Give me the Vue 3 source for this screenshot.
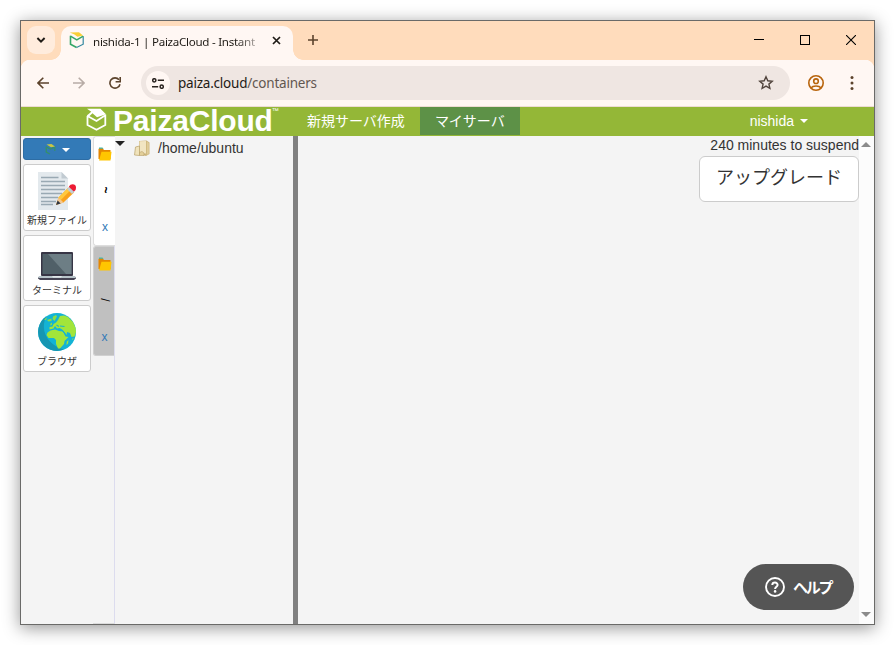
<script setup>
import { ref } from 'vue'

// ====== Ref & data declarations ======
const activeDir = ref('~')
const dirs = ref(['~', '/'])
const tools = [
  { id: 'file', label: '新規ファイル' },
  { id: 'terminal', label: 'ターミナル' },
  { id: 'browser', label: 'ブラウザ' },
]

// ====== Functions declarations ======
const selectDir = (dir) => {
  activeDir.value = dir
}
const closeDir = (dir) => {
  dirs.value = dirs.value.filter((item) => item !== dir)
}
</script>

<template>
  <div class="desktop">
    <div class="window">
      <!-- Tab strip -->
      <div class="tab-strip">
        <button class="tab-search">
          <svg width="10" height="8" viewBox="0 0 10 8">
            <path d="M1.4 2 L5 5.6 L8.6 2" fill="none" stroke="#1f1b16" stroke-width="1.9" />
          </svg>
        </button>
        <div class="tab">
          <svg class="favicon" width="16" height="17" viewBox="0 0 16 17">
            <path d="M1.5 3.8 V12.2 L7.6 15.5" fill="none" stroke="#36a768" stroke-width="1.6" />
            <path d="M7.6 15.5 L14.2 12.2 V4.2" fill="none" stroke="#3488a0" stroke-width="1.2" />
            <path d="M1.5 4.2 L7.8 7.8 L14.2 4.2" fill="none" stroke="#36a768" stroke-width="1.5" />
            <path d="M0.8 0.6 L10 0.3 L14 3.5 L8.5 4.8 L5.5 2.4 Z" fill="#f8cf36" />
          </svg>
          <span class="tab-title">nishida-1 | PaizaCloud - Instant</span>
          <svg class="tab-close" width="9" height="9" viewBox="0 0 9 9">
            <path d="M1 1 L8 8 M8 1 L1 8" stroke="#1f1b16" stroke-width="1.7" />
          </svg>
        </div>
        <svg class="new-tab" width="10" height="10" viewBox="0 0 10 10">
          <path d="M5 0 V10 M0 5 H10" stroke="#5c432c" stroke-width="1.6" />
        </svg>
        <div class="window-controls">
          <svg width="10" height="10" viewBox="0 0 10 10">
            <path d="M0 4.5 H10" stroke="#000" />
          </svg>
          <svg width="10" height="10" viewBox="0 0 10 10">
            <rect x="0.5" y="0.5" width="9" height="9" fill="none" stroke="#000" />
          </svg>
          <svg width="10" height="10" viewBox="0 0 10 10">
            <path d="M0 0 L10 10 M10 0 L0 10" stroke="#000" stroke-width="1.1" />
          </svg>
        </div>
      </div>

      <!-- Toolbar -->
      <div class="toolbar">
        <div class="nav-buttons">
          <svg width="12" height="12" viewBox="0 0 12 12">
            <path d="M12 6 H1 M6.3 0.7 L1 6 L6.3 11.3" fill="none" stroke="#5c432c" stroke-width="1.6" />
          </svg>
          <svg width="12" height="12" viewBox="0 0 12 12">
            <path d="M0 6 H11 M5.7 0.7 L11 6 L5.7 11.3" fill="none" stroke="#b8aca6" stroke-width="1.6" />
          </svg>
          <svg width="12" height="12" viewBox="0 0 12 12">
            <path d="M10 2.8 A5.1 5.1 0 1 0 11 7.2" fill="none" stroke="#5c432c" stroke-width="1.6" />
            <path d="M11.2 0 V4.7 H6.6" fill="none" stroke="#5c432c" stroke-width="1.6" />
          </svg>
        </div>
        <div class="address-bar">
          <span class="site-info">
            <svg width="12" height="11" viewBox="0 0 12 11">
              <g fill="none" stroke="#29231f" stroke-width="1.5">
                <circle cx="2.3" cy="2.3" r="1.6" />
                <path d="M5.8 2.3 H12 M0 8.7 H6.2" />
                <circle cx="9.7" cy="8.7" r="1.6" />
              </g>
            </svg>
          </span>
          <span class="url">paiza.cloud<span class="url-path">/containers</span></span>
          <svg class="star" width="16" height="16" viewBox="0 0 16 16">
            <path
              d="M8 1.8 L9.8 5.8 L14.2 6.2 L10.9 9.1 L11.9 13.4 L8 11.1 L4.1 13.4 L5.1 9.1 L1.8 6.2 L6.2 5.8 Z"
              fill="none"
              stroke="#51443d"
              stroke-width="1.4"
            />
          </svg>
        </div>
        <svg class="profile" width="18" height="18" viewBox="0 0 18 18">
          <g fill="none" stroke="#b8640c" stroke-width="1.6">
            <circle cx="9" cy="9" r="7.2" />
            <circle cx="9" cy="7.2" r="2.3" />
            <path d="M3.9 14 C6 11.3 12 11.3 14.1 14" />
          </g>
        </svg>
        <svg class="kebab" width="4" height="14" viewBox="0 0 4 14">
          <g fill="#5c432c">
            <circle cx="2" cy="1.6" r="1.5" />
            <circle cx="2" cy="7" r="1.5" />
            <circle cx="2" cy="12.4" r="1.5" />
          </g>
        </svg>
      </div>

      <!-- Site navbar -->
      <nav class="navbar">
        <a class="brand">
          <svg width="21" height="23" viewBox="0 0 21 23">
            <path
              d="M1.5 8 V17 L10.5 21.8 L19.3 17 V6.5 M1.5 8 L10.5 13 L19.3 7.2"
              fill="none"
              stroke="#fff"
              stroke-width="1.8"
            />
            <path d="M1 0.8 H14.5 L20 6.3 L11 9.2 L6.5 5.2 L2.5 9 L0.8 7.5 L5.3 3.8 Z" fill="#fff" />
          </svg>
          <span class="brand-name">PaizaCloud</span>
          <span class="brand-tm">™</span>
        </a>
        <a class="nav-item">新規サーバ作成</a>
        <a class="nav-item active">マイサーバ</a>
        <a class="user-menu">nishida <span class="caret"></span></a>
      </nav>

      <!-- Workspace -->
      <main class="workspace">
        <aside class="tools">
          <button class="server-menu">
            <svg width="11" height="12" viewBox="0 0 11 12">
              <path d="M1.3 3.5 V9 L5 11" fill="none" stroke="#35906b" stroke-width="1.4" />
              <path d="M1.3 4 L5.3 6 L9.8 4.2 V8" fill="none" stroke="#35906b" stroke-width="1.2" />
              <path d="M1.5 1.6 L6.5 1 L10 3.6 L6 4.2 Z" fill="#c9c744" />
            </svg>
            <span class="caret"></span>
          </button>
          <button v-for="tool in tools" :key="tool.id" class="tool" :class="tool.id">
            <svg v-if="tool.id === 'file'" width="38" height="38" viewBox="0 0 38 38">
              <path d="M0 0 H23.5 L30 6.5 V38 H0 Z" fill="#e3e9ed" />
              <path d="M23.5 0 L30 6.5 H23.5 Z" fill="#c2cbd2" />
              <path
                d="M3 5.5 H20.5 M3 9.5 H27 M3 13.5 H27 M3 17.5 H27 M3 21.5 H24 M3 25.5 H20 M3 29.5 H18 M3 32.5 H15"
                stroke="#99a9b3"
                stroke-width="1.5"
              />
              <path d="M18 33 L20.5 25.5 L30.5 15.5 L36 20.5 L25.5 30.5 Z" fill="#f9a11b" />
              <path d="M20.5 25.5 L30.5 15.5 L33 17.8 L22.8 28 Z" fill="#ffc83d" />
              <path d="M18 33 L20.5 25.5 L25.5 30.5 Z" fill="#f3c891" />
              <path d="M18 33 L19.6 28.5 L22.6 31.4 Z" fill="#303743" />
              <path d="M29 17 L31.6 14.4 L36.6 19.4 L34 22 Z" fill="#c2ccd4" />
              <path d="M30.8 14.8 C32.5 11.3 38 11.5 38 15.5 C38 17.5 37.5 18.5 35.8 19.6 Z" fill="#ed1c34" />
            </svg>
            <svg v-else-if="tool.id === 'terminal'" width="38" height="28" viewBox="0 0 38 28">
              <rect x="3" y="0" width="32" height="24" rx="1" fill="#373545" />
              <rect x="4.5" y="2" width="29" height="20" fill="#506068" />
              <path d="M10 2 H33.5 V22 H28 Z" fill="#6d7e85" />
              <path d="M0 25 H38 V26.5 L36 28 H2 L0 26.5 Z" fill="#454353" />
              <path d="M1 24 H37 L38 26 H0 Z" fill="#b7c3c9" />
              <path d="M14 24 H24 L23 25.5 H15 Z" fill="#e1e7ea" />
            </svg>
            <svg v-else width="38" height="38" viewBox="0 0 38 38">
              <circle cx="19" cy="19" r="19" fill="#13b3d5" />
              <path d="M8 3.5 A19 19 0 0 0 26 36.6 C12 33 1 20 8 3.5 Z" fill="#1696b2" />
              <path
                d="M20 7 L22 3 L26 2.5 L30 4 L35 9 L37.6 15 L38 19 L36.5 23.5 L33.5 24 L32 20 L29 19 L28.5 22 L26 18.5 L23.5 16 L21.5 15 L19 15.5 L17 13 L15.5 15.5 L11.5 16.5 L11.5 14 L14.5 13.5 L15.5 11 L18 9.5 Z"
                fill="#a2e53a"
              />
              <path
                d="M12.5 17.5 L17 16.5 L21 18 L25 18.5 L27.5 23.5 L30.5 24 L26.5 28 L26 31 L22 35.5 L20 35.5 L18 31 L18 27 L16 25 L10.5 25 L8.5 22 L9.5 19.5 Z"
                fill="#a2e53a"
              />
              <path
                d="M15 3.5 L18 2 L19 3.5 L16.5 8 L14.5 6 Z M9 7 L13.5 5.5 L13.5 8 L10.5 8.5 Z M12.5 10.5 L14 9.5 L14 12 L12 12.5 Z M6 6.5 L9 4.5 L8 7 Z"
                fill="#8cdd45"
              />
              <path d="M18.5 12 L21 13.5 M22 13 L26.5 13.5 M24 17 L27.5 21.5" stroke="#13b3d5" stroke-width="1.1" />
              <path d="M28.8 28.5 L30.5 27 L30 30.5 L28.5 32 Z M34 26 L35.5 25 L35 27 Z" fill="#a2e53a" />
            </svg>
            <span>{{ tool.label }}</span>
          </button>
        </aside>

        <div class="dir-tabs">
          <div
            v-for="dir in dirs"
            :key="dir"
            class="dir-tab"
            :class="{ active: dir === activeDir }"
            @click="selectDir(dir)"
          >
            <svg width="14" height="14" viewBox="0 0 14 14">
              <path d="M1 0.5 H4.5 L5.5 2 H1 Z" fill="#42b8ab" />
              <path d="M0.5 1.8 H5 L6 3 H12.5 V12 H0.5 Z" fill="#e58600" />
              <path d="M3.5 4.7 H13.5 L12.5 13.5 H1 Z" fill="#ffc600" />
            </svg>
            <span class="dir-name">{{ dir }}</span>
            <a class="dir-close" @click.stop="closeDir(dir)">x</a>
          </div>
        </div>

        <section class="tree">
          <span class="tree-toggle"></span>
          <svg width="16" height="17" viewBox="0 0 16 17">
            <path d="M5 1 L12.5 0.5 L15.5 2.5 V14 L12 16 L5 14 Z" fill="#cdb67c" />
            <path d="M5.5 1.3 L12 1 V13.5 H5.5 Z" fill="#f1e5c2" />
            <path d="M12.8 1.5 L14.8 3 V13.5 L12.8 15 Z" fill="#dfcc9a" />
            <path d="M1.5 7 L5.5 6 V15.5 L0.5 15 Z" fill="#f0e3bb" stroke="#b8a06a" stroke-width="0.7" />
            <path d="M5.5 12.5 L8 11.5 L10 13 V15.5 H5.5 Z" fill="#e3d09a" stroke="#b8a06a" stroke-width="0.6" />
          </svg>
          <span class="tree-label">/home/ubuntu</span>
        </section>

        <div class="splitter"></div>

        <section class="content">
          <div class="suspend">240 minutes to suspend</div>
          <button class="upgrade">アップグレード</button>
        </section>

        <div class="scrollbar">
          <span class="arrow-up"></span>
          <span class="arrow-down"></span>
        </div>
      </main>

      <button class="help">
        <svg width="20" height="20" viewBox="0 0 20 20">
          <circle cx="10" cy="10" r="9" fill="none" stroke="#fff" stroke-width="1.9" />
          <path
            d="M7.3 8 C7.4 4.8 12.7 4.8 12.6 8 C12.5 9.8 10.1 9.9 10.1 12"
            fill="none"
            stroke="#fff"
            stroke-width="2"
          />
          <circle cx="10.1" cy="14.4" r="1.3" fill="#fff" />
        </svg>
        <span>ヘルプ</span>
      </button>
    </div>
  </div>
</template>

<style>
body {
  background: #fff;
}
</style>

<style scoped>
.desktop {
  box-sizing: border-box;
  width: 895px;
  height: 645px;
  padding: 20px;
  overflow: hidden;
  font-family: 'Liberation Sans', 'Noto Sans CJK JP', sans-serif;
  font-size: 14px;
  color: #333;
}

.desktop * {
  box-sizing: border-box;
}

.desktop svg {
  display: block;
  flex: none;
}

button {
  padding: 0;
  margin: 0;
  border: none;
  font-family: inherit;
  color: inherit;
}

.window {
  position: relative;
  display: flex;
  flex-direction: column;
  width: 855px;
  height: 605px;
  border: 1px solid #6a6a68;
  background: #f4f4f4;
  box-shadow: 0 3px 16px rgba(0, 0, 0, 0.42);
}

/* tab strip */
.tab-strip {
  display: flex;
  height: 39px;
  padding: 5px 18px 0 6px;
  background: #ffdcbc;
}

.tab-search {
  display: flex;
  align-items: center;
  justify-content: center;
  width: 28px;
  height: 28px;
  border-radius: 9px;
  background: #ffecdd;
}

.tab {
  position: relative;
  display: flex;
  align-items: center;
  width: 232px;
  height: 34px;
  margin-left: 6px;
  padding: 0 12px 4px 8px;
  border-radius: 10px 10px 0 0;
  background: #fff7f3;
}

.tab::before,
.tab::after {
  content: '';
  position: absolute;
  bottom: 0;
  width: 10px;
  height: 10px;
}

.tab::before {
  left: -10px;
  background: radial-gradient(circle at 0 0, transparent 9.5px, #fff7f3 10px);
}

.tab::after {
  right: -10px;
  background: radial-gradient(circle at 100% 0, transparent 9.5px, #fff7f3 10px);
}

.favicon {
  margin-top: -2px;
}

.tab-title {
  width: 168px;
  margin-left: 8px;
  white-space: nowrap;
  font-family: 'Noto Sans', sans-serif;
  font-size: 11.6px;
  letter-spacing: -0.28px;
  color: #1f1b16;
  mask-image: linear-gradient(to right, #000 142px, rgba(0, 0, 0, 0.25) 167px);
}

.tab-close {
  margin: -2px 0 0 auto;
}

.new-tab {
  margin: 9px 0 0 15px;
}

.window-controls {
  display: flex;
  gap: 36px;
  margin: 9px 0 0 auto;
}

/* toolbar */
.toolbar {
  display: flex;
  align-items: center;
  height: 47px;
  padding: 0 20px 0 16px;
  border-bottom: 1px solid #eddcd3;
  background: radial-gradient(circle at 9px 9px, #fff7f3 9px, #ffdcbc 9.5px) 0 0 / 9px 9px no-repeat,
    radial-gradient(circle at 0 9px, #fff7f3 9px, #ffdcbc 9.5px) 100% 0 / 9px 9px no-repeat,
    #fff7f3;
}

.nav-buttons {
  display: flex;
  gap: 24px;
}

.address-bar {
  display: flex;
  align-items: center;
  width: 649px;
  height: 34px;
  margin-left: 20px;
  padding: 0 16px 0 5px;
  border-radius: 17px;
  background: #efe6e2;
}

.site-info {
  display: flex;
  align-items: center;
  justify-content: center;
  width: 24px;
  height: 24px;
  border-radius: 50%;
  background: #fff7f3;
}

.url {
  margin-left: 8px;
  font-family: 'Noto Sans', sans-serif;
  font-size: 13.5px;
  letter-spacing: -0.22px;
  color: #1f1b16;
}

.url-path {
  color: #625750;
}

.star {
  margin-left: auto;
}

.profile {
  margin-left: 17px;
}

.kebab {
  margin-left: auto;
}

/* navbar */
.navbar {
  display: flex;
  height: 29px;
  padding: 0 66px 0 65px;
  background: #94b737;
  color: #fff;
  line-height: 28px;
}

.brand {
  display: flex;
  width: 206px;
  padding-top: 1px;
}

.brand-name {
  margin-left: 6px;
  font-size: 30px;
  font-weight: bold;
  line-height: 25px;
  letter-spacing: -0.2px;
}

.brand-tm {
  margin-left: -1px;
  font-size: 7px;
  line-height: 6px;
}

.nav-item {
  height: 28px;
  padding: 0 15px;
  white-space: nowrap;
}

.nav-item.active {
  width: 100px;
  background: #5d9147;
}

.user-menu {
  display: flex;
  align-items: center;
  height: 28px;
  margin-left: auto;
}

.caret {
  margin-left: 6px;
  border: 4px solid transparent;
  border-top-color: #fff;
  border-bottom: none;
}

/* workspace */
.workspace {
  display: flex;
  flex: 1;
  min-height: 0;
}

.tools {
  display: flex;
  flex-direction: column;
  gap: 4px;
  width: 72px;
  padding: 2px;
}

.server-menu {
  display: flex;
  align-items: center;
  justify-content: center;
  width: 68px;
  height: 22px;
  border: 1px solid #2e6da4;
  border-radius: 3px;
  background: #337ab7;
}

.server-menu .caret {
  margin-top: 2px;
}

.tool {
  display: flex;
  flex-direction: column;
  align-items: center;
  width: 68px;
  height: 67px;
  padding-top: 7px;
  border: 1px solid #ccc;
  border-radius: 3px;
  background: #fff;
  font-size: 10px;
}

.tool span {
  margin-top: 4px;
  line-height: 14px;
  white-space: nowrap;
}

.tool.terminal {
  height: 66px;
  padding-top: 16px;
}

.dir-tabs {
  width: 22px;
  border-right: 1px solid #dcdcee;
  border-bottom: 1px solid #dcdcdc;
}

.dir-tab {
  display: flex;
  flex-direction: column;
  align-items: center;
  height: 110px;
  padding: 10px 0 0 1px;
  border: 1px solid #d0d0d0;
  border-right: none;
  border-radius: 3px 0 0 3px;
  background: #c0c0c0;
  font-size: 12px;
  color: #000;
}

.dir-tab.active {
  margin-right: -1px;
  border-color: #ddd;
  background: #fff;
}

.dir-name {
  height: 14px;
  margin-top: 22px;
  line-height: 14px;
  transform: rotate(90deg);
}

.dir-tab.active .dir-name {
  font-weight: bold;
}

.dir-close {
  margin-top: 23px;
  line-height: 14px;
  color: #337ab7;
}

.tree {
  display: flex;
  align-items: flex-start;
  width: 178px;
  padding-top: 4px;
}

.tree-toggle {
  margin-top: 1px;
  border: 5px solid transparent;
  border-top: 5px solid #222;
  border-bottom: none;
}

.tree-label {
  margin-left: 8px;
  line-height: 17px;
}

.tree svg {
  margin-left: 9px;
}

.splitter {
  width: 5px;
  background: #808080;
}

.content {
  display: flex;
  flex: 1;
  flex-direction: column;
  align-items: flex-end;
}

.suspend {
  height: 20px;
  line-height: 19px;
}

.upgrade {
  width: 160px;
  height: 46px;
  padding-bottom: 6px;
  border: 1px solid #ccc;
  border-radius: 6px;
  background: #fff;
  font-size: 18px;
}

.scrollbar {
  display: flex;
  flex-direction: column;
  align-items: center;
  justify-content: space-between;
  width: 15px;
  padding: 6px 0 7px;
  background: #fcfcfc;
}

.arrow-up,
.arrow-down {
  margin-left: -1px;
  border: 5px solid transparent;
}

.arrow-up {
  border-top: none;
  border-bottom: 5px solid #8b8b8b;
}

.arrow-down {
  border-bottom: none;
  border-top: 5px solid #8b8b8b;
}

.help {
  position: absolute;
  right: 20px;
  bottom: 14px;
  display: flex;
  align-items: center;
  width: 111px;
  height: 46px;
  padding-left: 22px;
  border-radius: 23px;
  background: #555;
  color: #fff;
  font-size: 15px;
  font-weight: bold;
}

.help span {
  margin: -2px 0 0 8px;
  letter-spacing: -2.3px;
}
</style>
